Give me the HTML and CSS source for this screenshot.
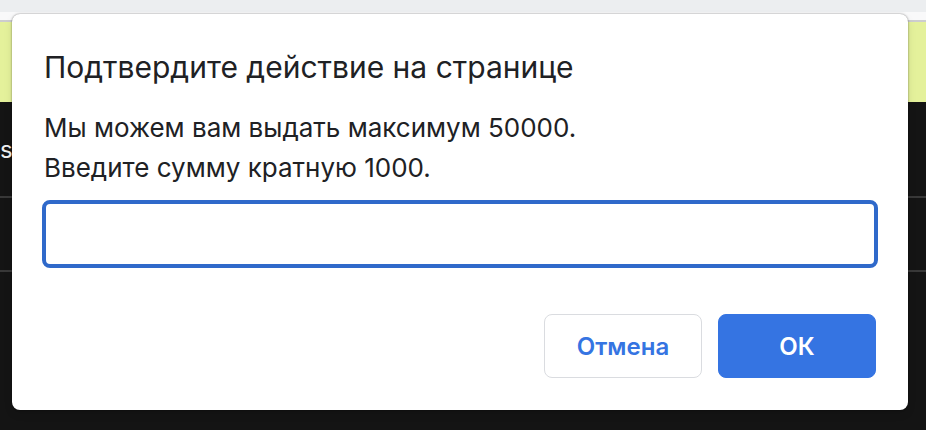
FILE: index.html
```html
<!DOCTYPE html>
<html lang="ru">
<head>
  <meta charset="utf-8">
  <title>Подтвердите действие на странице</title>
  <link rel="stylesheet" href="styles.css">
</head>
<body>
  <div class="page">
    <div class="tab-strip"></div>
    <div class="toolbar"></div>
    <div class="notice"></div>
    <div class="panel-row">s</div>
    <div class="panel-row panel-row-short"></div>
    <div class="panel-body"></div>
  </div>
  <div class="overlay">
    <form class="dialog" role="dialog" aria-labelledby="dialog-title">
      <h1 class="dialog-title" id="dialog-title">Подтвердите действие на странице</h1>
      <label class="dialog-message" for="amount">Мы можем вам выдать максимум 50000.<br>Введите сумму кратную 1000.</label>
      <input class="dialog-input" id="amount" type="text">
      <div class="dialog-actions">
        <button class="button" type="button">Отмена</button>
        <button class="button button-primary" type="submit">ОК</button>
      </div>
    </form>
  </div>
</body>
</html>
```
FILE: styles.css
```css
* {
  box-sizing: border-box;
}

body {
  margin: 0;
  font-family: Inter, "Liberation Sans", sans-serif;
  color: #202124;
}

.page {
  display: flex;
  flex-direction: column;
  min-height: 100vh;
  background: #141414;
}

.tab-strip {
  height: 12px;
  background: #eceef0;
}

.toolbar {
  height: 10px;
  background: #f9f9fa;
  border-bottom: 2px solid #cdcdcf;
}

.notice {
  height: 80px;
  background: #e4f19b;
}

.panel-row {
  display: flex;
  align-items: center;
  height: 96px;
  border-bottom: 2px solid #383838;
  color: #f0f0f0;
  font-size: 24px;
}

.panel-row-short {
  height: 74px;
}

.panel-body {
  flex: 1;
}

.overlay {
  position: absolute;
  top: 0;
  left: 0;
  right: 0;
  padding: 14px 18px 20px 12px;
}

.dialog {
  display: flex;
  flex-direction: column;
  padding: 32px 30px;
  background: #fff;
  border-radius: 8px;
  box-shadow: 0 0 2px rgba(0, 0, 0, 0.5), 0 4px 8px rgba(0, 0, 0, 0.1);
}

.dialog-title {
  margin: 0 2px 20px;
  font-size: 30px;
  line-height: 42px;
  font-weight: 400;
}

.dialog-message {
  margin: 0 2px 12px;
  font-size: 26px;
  line-height: 40px;
}

.dialog-input {
  width: 100%;
  height: 68px;
  padding: 0 16px;
  border: 4px solid #2f69ca;
  border-radius: 8px;
  outline: none;
  background: #fff;
  color: inherit;
  font: inherit;
  font-size: 26px;
}

.dialog-actions {
  display: flex;
  justify-content: flex-end;
  gap: 16px;
  margin: 46px 2px 0;
}

.button {
  min-width: 158px;
  height: 64px;
  padding: 0 24px;
  border: 1px solid #dadce0;
  border-radius: 8px;
  background: #fff;
  color: #3574e2;
  font: inherit;
  font-size: 24px;
  font-weight: 600;
}

.button-primary {
  border-color: #3574e2;
  background: #3574e2;
  color: #fff;
}
```
